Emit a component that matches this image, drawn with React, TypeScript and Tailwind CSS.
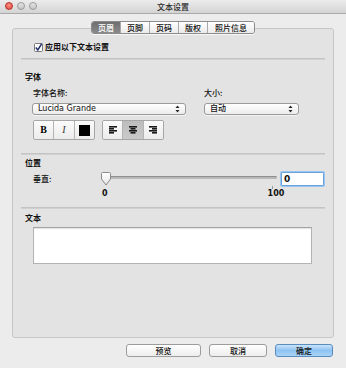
import React from "react";

const cjk = { fontFamily: '"Noto Sans CJK SC", "DejaVu Sans", sans-serif' };
const latin = { fontFamily: '"DejaVu Sans", "Noto Sans CJK SC", sans-serif' };

function Separator() {
  return <div className="mx-[8px] h-[2px] border-t border-[#c4c4c4] border-b-white bg-[#d0d0d0]" />;
}

function UpDown() {
  return (
    <svg width="5" height="8" viewBox="0 0 5 8" className="shrink-0">
      <path d="M2.5 0.5 L4.5 3 L0.5 3 Z" fill="#222" />
      <path d="M2.5 7.5 L4.5 5 L0.5 5 Z" fill="#222" />
    </svg>
  );
}

function Select({ label, width }: { label: string; width: string }) {
  return (
    <div
      className={`${width} flex h-[12px] items-center justify-between rounded-[3px] border border-[#9a9a9a] bg-gradient-to-b from-white to-[#ececec] pl-[5px] pr-[5px] shadow-[0_1px_0_rgba(255,255,255,0.6)]`}
    >
      <span className="text-[8px] font-medium leading-none text-[#111]" style={latin}>
        {label}
      </span>
      <UpDown />
    </div>
  );
}

function AlignIcon({ kind }: { kind: "left" | "center" | "right" }) {
  const rows =
    kind === "left"
      ? [
          [0, 8],
          [0, 5],
          [0, 8],
          [0, 5],
        ]
      : kind === "center"
        ? [
            [0, 8],
            [1.5, 5],
            [0, 8],
            [1.5, 5],
          ]
        : [
            [0, 8],
            [3, 5],
            [0, 8],
            [3, 5],
          ];
  return (
    <svg width="8" height="8" viewBox="0 0 8 8">
      {rows.map(([x, w], i) => (
        <rect key={i} x={x} y={i * 2} width={w} height="1.6" fill="#1a1a1a" />
      ))}
    </svg>
  );
}

function SegButton({
  children,
  selected,
  last,
}: {
  children: React.ReactNode;
  selected?: boolean;
  last?: boolean;
}) {
  return (
    <div
      className={`flex h-full flex-1 items-center justify-center ${last ? "" : "border-r border-[#b4b4b4]"} ${
        selected ? "bg-gradient-to-b from-[#bdbdbd] to-[#c9c9c9]" : "bg-gradient-to-b from-[#fbfbfb] to-[#ececec]"
      }`}
    >
      {children}
    </div>
  );
}

function PushButton({ label, width, primary }: { label: string; width: string; primary?: boolean }) {
  return (
    <div
      className={`${width} flex h-[13px] items-center justify-center rounded-[3px] border ${
        primary
          ? "border-[#5a8cc0] bg-gradient-to-b from-[#c9e3fb] via-[#8ec3f1] to-[#a9d3f7]"
          : "border-[#9c9c9c] bg-gradient-to-b from-white to-[#ededed]"
      }`}
    >
      <span className="text-[8px] font-medium leading-none text-[#111]" style={cjk}>
        {label}
      </span>
    </div>
  );
}

const tabs = [
  { label: "页眉", w: "w-[29px]" },
  { label: "页脚", w: "w-[29px]" },
  { label: "页码", w: "w-[29px]" },
  { label: "版权", w: "w-[29px]" },
  { label: "照片信息", w: "w-[46px]" },
];

export default function App() {
  return (
    <div className="flex h-[368px] w-[346px] flex-col bg-[#ececec]" style={cjk}>
      {/* title bar */}
      <div className="relative flex h-[14px] items-center justify-center border-b border-[#a9a9a9] bg-gradient-to-b from-[#ececec] to-[#d4d4d4]">
        <div className="absolute left-[5px] top-[2px] flex gap-[4px]">
          <span className="h-[8px] w-[8px] rounded-full border border-[#b4352c] bg-[radial-gradient(circle_at_50%_35%,#ff8f84,#e0443a)]" />
          <span className="h-[8px] w-[8px] rounded-full border border-[#9a9a9a] bg-gradient-to-b from-[#e6e6e6] to-[#c4c4c4]" />
          <span className="h-[8px] w-[8px] rounded-full border border-[#9a9a9a] bg-gradient-to-b from-[#e6e6e6] to-[#c4c4c4]" />
        </div>
        <span className="text-[8px] font-medium leading-none text-[#2a2a2a]">文本设置</span>
      </div>

      {/* tabs */}
      <div className="relative z-10 mt-[7px] flex justify-center">
        <div className="flex h-[13px] overflow-hidden rounded-[3px] border border-[#8c8c8c] shadow-[0_1px_0_rgba(255,255,255,0.7)]">
          {tabs.map((t, i) => (
            <div
              key={t.label}
              className={`${t.w} flex items-center justify-center ${i < tabs.length - 1 ? "border-r border-[#a8a8a8]" : ""} ${
                i === 0 ? "bg-gradient-to-b from-[#6e6e6e] to-[#8a8a8a] text-white" : "bg-gradient-to-b from-white to-[#ebebeb] text-[#111]"
              }`}
            >
              <span className="text-[8px] font-medium leading-none">{t.label}</span>
            </div>
          ))}
        </div>
      </div>

      {/* group box */}
      <div className="mx-[12px] -mt-[6px] flex h-[310px] flex-col rounded-[3px] border border-[#c6c6c6] bg-[#e3e3e3]">
        <div className="mt-[13px] flex h-[10px] items-center gap-[2px] pl-[21px]">
          <svg width="9" height="9" viewBox="0 0 9 9">
            <rect x="0.5" y="0.5" width="8" height="8" rx="1" fill="white" stroke="#7a7a7a" />
            <path d="M1.8 4.6 L3.8 7 L7.8 0.6" fill="none" stroke="#1f2f6a" strokeWidth="1.5" />
          </svg>
          <span className="text-[8px] font-semibold leading-none text-[#111]">应用以下文本设置</span>
        </div>

        <div className="mt-[6px]">
          <Separator />
        </div>

        <div className="mt-[12px] flex h-[10px] items-center pl-[12px]">
          <span className="text-[8px] font-bold leading-none text-[#111]">字体</span>
        </div>

        <div className="mt-[6px] flex h-[10px] items-center pl-[20px]">
          <span className="w-[171px] text-[8px] font-medium leading-none text-[#111]">字体名称:</span>
          <span className="text-[8px] font-medium leading-none text-[#111]">大小:</span>
        </div>

        <div className="mt-[5px] flex pl-[19px]">
          <Select label="Lucida Grande" width="w-[154px]" />
          <div className="w-[18px]" />
          <Select label="自动" width="w-[95px]" />
        </div>

        <div className="mt-[5px] flex h-[20px] gap-[7px] pl-[20px]">
          <div className="flex h-full w-[62px] overflow-hidden rounded-[2px] border border-[#a6a6a6]">
            <SegButton>
              <span className="text-[10px] font-bold leading-none" style={{ fontFamily: '"Liberation Serif", serif' }}>
                B
              </span>
            </SegButton>
            <SegButton>
              <span className="text-[10px] italic leading-none text-[#333]" style={{ fontFamily: '"Liberation Serif", serif' }}>
                I
              </span>
            </SegButton>
            <SegButton last>
              <span className="h-[11px] w-[11px] bg-black" />
            </SegButton>
          </div>
          <div className="flex h-full w-[62px] overflow-hidden rounded-[2px] border border-[#a6a6a6]">
            <SegButton>
              <AlignIcon kind="left" />
            </SegButton>
            <SegButton selected>
              <AlignIcon kind="center" />
            </SegButton>
            <SegButton last>
              <AlignIcon kind="right" />
            </SegButton>
          </div>
        </div>

        <div className="mt-[13px]">
          <Separator />
        </div>

        <div className="mt-[3px] flex h-[10px] items-center pl-[12px]">
          <span className="text-[8px] font-bold leading-none text-[#111]">位置</span>
        </div>

        <div className="mt-[4px] flex h-[14px] items-center pl-[20px]">
          <span className="w-[67px] text-[8px] font-medium leading-none text-[#111]">垂直:</span>
          <div className="relative h-full w-[177px]">
            <div className="absolute left-[3px] right-0 top-[4px] h-[3px] rounded-full border-t border-[#8e8e8e] bg-[#b8b8b8]" />
            <svg className="absolute left-0 top-0" width="12" height="14" viewBox="0 0 12 14">
              <path
                d="M1.5 1.5 Q1.5 0.5 2.5 0.5 L9.5 0.5 Q10.5 0.5 10.5 1.5 L10.5 7 L6 13 L1.5 7 Z"
                fill="url(#knob)"
                stroke="#8a8a8a"
              />
              <defs>
                <linearGradient id="knob" x1="0" y1="0" x2="0" y2="1">
                  <stop offset="0" stopColor="#ffffff" />
                  <stop offset="1" stopColor="#e6e6e6" />
                </linearGradient>
              </defs>
            </svg>
          </div>
          <div className="ml-[4px] flex h-[14px] w-[43px] items-center rounded-[1px] border border-[#6aa3dc] bg-white pl-[2px] shadow-[0_0_0_1px_#9cc6ef]">
            <span className="text-[9px] font-semibold leading-none text-[#111]" style={latin}>
              0
            </span>
          </div>
        </div>

        <div className="relative mt-[3px] flex h-[10px] items-center pl-[89px]">
          <span className="text-[8px] font-semibold leading-none text-[#111]" style={latin}>
            0
          </span>
          <span className="ml-[160px] text-[8px] font-semibold leading-none text-[#111]" style={latin}>
            100
          </span>
          <span className="absolute left-[259px] -top-[3px] h-[3px] w-px bg-[#9a9a9a]" />
        </div>

        <div className="mt-[8px]">
          <Separator />
        </div>

        <div className="mt-[4px] flex h-[10px] items-center pl-[12px]">
          <span className="text-[8px] font-bold leading-none text-[#111]">文本</span>
        </div>

        <div className="ml-[20px] mt-[4px] h-[37px] w-[279px] border border-[#b4b4b4] border-t-[#a4a4a4] bg-white shadow-[inset_0_1px_1px_rgba(0,0,0,0.12)]" />
      </div>

      {/* bottom buttons */}
      <div className="mt-[6px] flex gap-[8px] pl-[126px]">
        <PushButton label="预览" width="w-[75px]" />
        <PushButton label="取消" width="w-[58px]" />
        <PushButton label="确定" width="w-[58px]" primary />
      </div>
    </div>
  );
}
